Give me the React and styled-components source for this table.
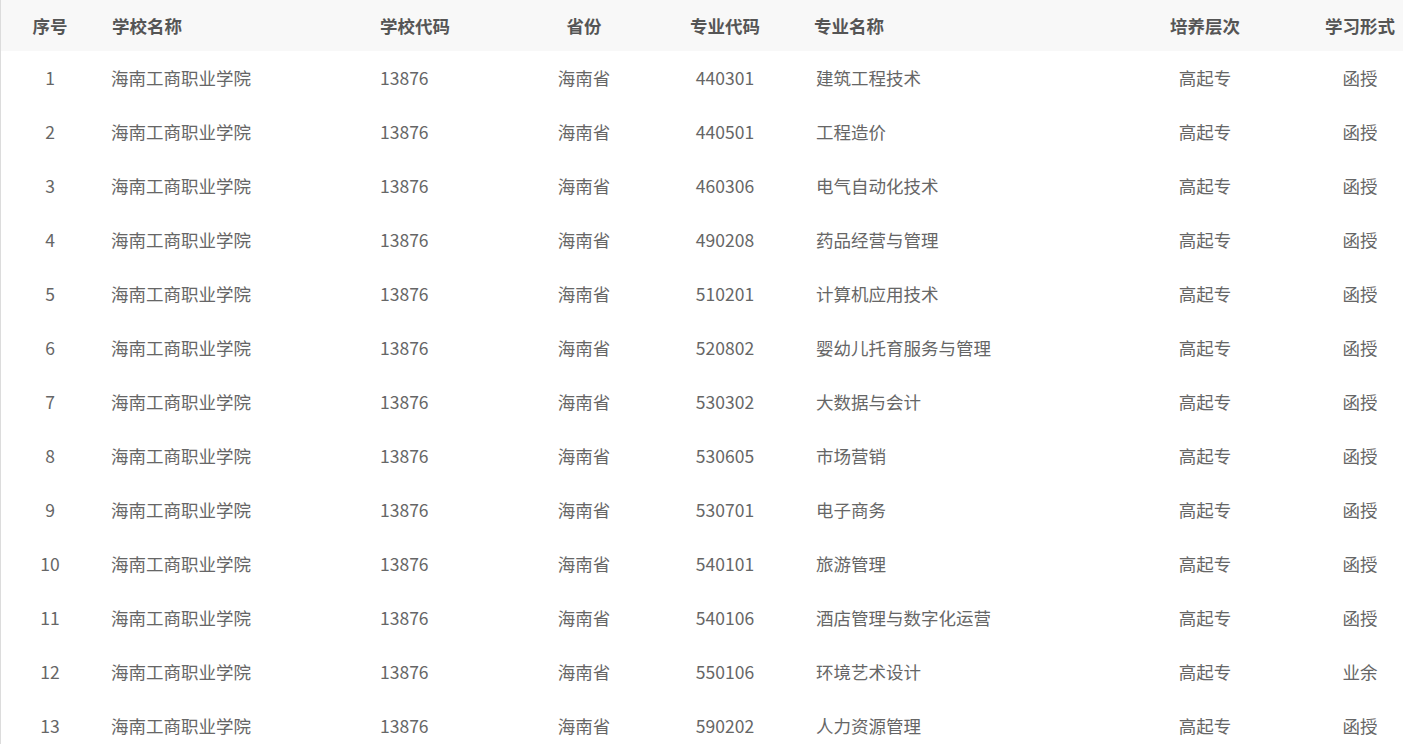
import React from 'react'
import styled, { createGlobalStyle } from 'styled-components'

const GlobalStyle = createGlobalStyle`
  html, body {
    margin: 0;
    padding: 0;
    background: #fff;
    font-family: "Noto Sans CJK SC", "Noto Sans", sans-serif;
  }
`

const columns = [
  { key: 'no', title: '序号', width: 100, align: 'center' },
  { key: 'school', title: '学校名称', width: 268, align: 'left' },
  { key: 'schoolCode', title: '学校代码', width: 152, align: 'left' },
  { key: 'province', title: '省份', width: 128, align: 'center' },
  { key: 'majorCode', title: '专业代码', width: 154, align: 'center' },
  { key: 'major', title: '专业名称', width: 328, align: 'left' },
  { key: 'level', title: '培养层次', width: 150, align: 'center' },
  { key: 'form', title: '学习形式', width: 160, align: 'center' },
]

const majors = [
  ['440301', '建筑工程技术', '函授'],
  ['440501', '工程造价', '函授'],
  ['460306', '电气自动化技术', '函授'],
  ['490208', '药品经营与管理', '函授'],
  ['510201', '计算机应用技术', '函授'],
  ['520802', '婴幼儿托育服务与管理', '函授'],
  ['530302', '大数据与会计', '函授'],
  ['530605', '市场营销', '函授'],
  ['530701', '电子商务', '函授'],
  ['540101', '旅游管理', '函授'],
  ['540106', '酒店管理与数字化运营', '函授'],
  ['550106', '环境艺术设计', '业余'],
  ['590202', '人力资源管理', '函授'],
]

const rows = majors.map(([majorCode, major, form], i) => ({
  no: i + 1,
  school: '海南工商职业学院',
  schoolCode: '13876',
  province: '海南省',
  majorCode,
  major,
  level: '高起专',
  form,
}))

function App() {
  return (
    <>
      <GlobalStyle />
      <Wrapper>
        <Table>
          <colgroup>
            {columns.map((c) => (
              <col key={c.key} style={{ width: c.width }} />
            ))}
          </colgroup>
          <thead>
            <tr>
              {columns.map((c) => (
                <Th key={c.key} $align={c.align}>
                  {c.title}
                </Th>
              ))}
            </tr>
          </thead>
          <tbody>
            {rows.map((r) => (
              <tr key={r.no}>
                {columns.map((c) => (
                  <Td key={c.key} $align={c.align}>
                    {r[c.key]}
                  </Td>
                ))}
              </tr>
            ))}
          </tbody>
        </Table>
      </Wrapper>
    </>
  )
}

const Wrapper = styled.div`
  width: 100vw;
  height: 744px;
  overflow: hidden;
  border-left: 1px solid #dcdcdc;
  box-sizing: border-box;
`

const Table = styled.table`
  border-collapse: collapse;
  table-layout: fixed;
  width: 1440px;
  margin-left: -1px;
`

const Th = styled.th`
  height: 50px;
  padding: 0 12px 1px;
  background: #f8f8f8;
  color: #555;
  font-size: 17.5px;
  font-weight: bold;
  text-align: ${(p) => p.$align};
  white-space: nowrap;
`

const Td = styled.td`
  height: 53px;
  padding: 0 12px 1px;
  color: #666;
  font-size: 17.5px;
  text-align: ${(p) => p.$align};
  white-space: nowrap;
  &:nth-child(2) {
    padding-left: 11px;
  }
  &:nth-child(6) {
    padding-left: 14px;
  }
`

export default App
